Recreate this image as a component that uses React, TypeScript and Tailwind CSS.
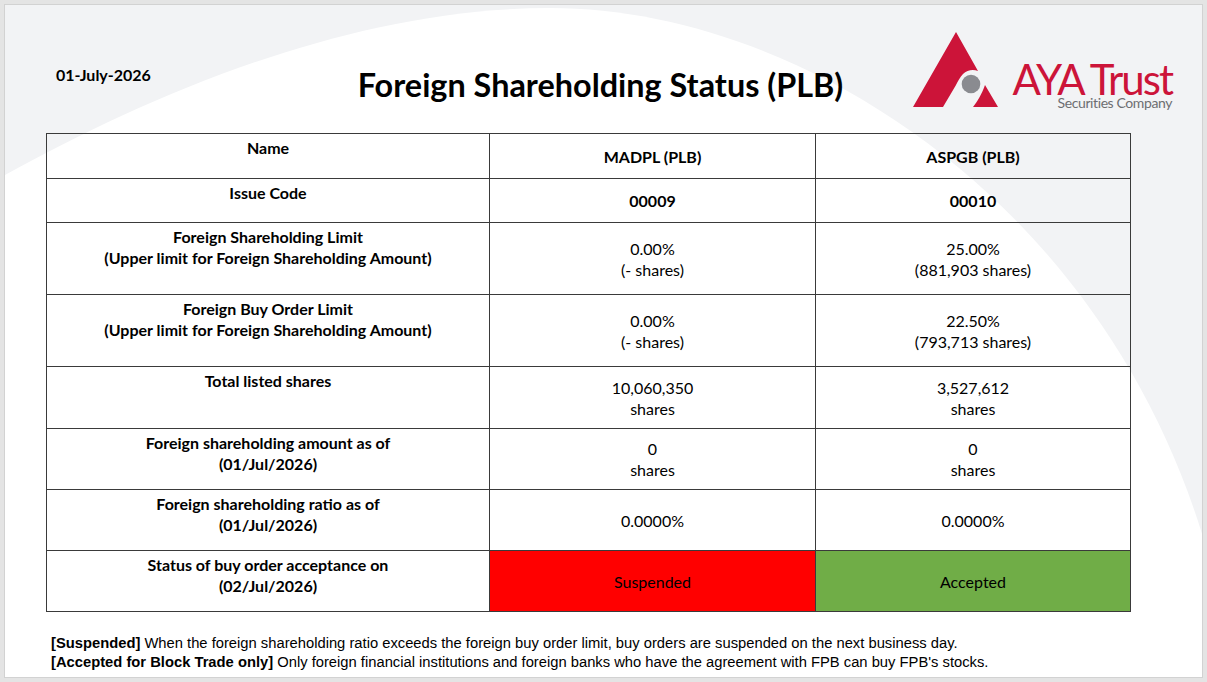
const BODY = '"Lato", "Open Sans", sans-serif';

type Row = {
  label: string[];
  h: string;
  a: string[];
  b: string[];
  bold?: boolean;
  status?: boolean;
};

const ROWS: Row[] = [
  { label: ['Name'], h: 'h-[45px]', a: ['MADPL (PLB)'], b: ['ASPGB (PLB)'], bold: true },
  { label: ['Issue Code'], h: 'h-[44px]', a: ['00009'], b: ['00010'], bold: true },
  {
    label: ['Foreign Shareholding Limit', '(Upper limit for Foreign Shareholding Amount)'],
    h: 'h-[72px]',
    a: ['0.00%', '(- shares)'],
    b: ['25.00%', '(881,903 shares)'],
  },
  {
    label: ['Foreign Buy Order Limit', '(Upper limit for Foreign Shareholding Amount)'],
    h: 'h-[72px]',
    a: ['0.00%', '(- shares)'],
    b: ['22.50%', '(793,713 shares)'],
  },
  { label: ['Total listed shares'], h: 'h-[62px]', a: ['10,060,350', 'shares'], b: ['3,527,612', 'shares'] },
  {
    label: ['Foreign shareholding amount as of', '(01/Jul/2026)'],
    h: 'h-[61px]',
    a: ['0', 'shares'],
    b: ['0', 'shares'],
  },
  {
    label: ['Foreign shareholding ratio as of', '(01/Jul/2026)'],
    h: 'h-[61px]',
    a: ['0.0000%'],
    b: ['0.0000%'],
  },
  {
    label: ['Status of buy order acceptance on', '(02/Jul/2026)'],
    h: 'h-[61px]',
    a: ['Suspended'],
    b: ['Accepted'],
    status: true,
  },
];

function Logo(): JSX.Element {
  return (
    <div className="flex items-start">
      <svg width="85" height="75" viewBox="0 0 85 75" className="shrink-0">
        <path
          d="M43,0 L65,39 C60,37 54,38 50,42 C47,45 45,49 43,53 L30,75 L0,75 Z"
          fill="#cc1439"
        />
        <path d="M72,53 L85,75 L60,75 C64,70 69,62 72,53 Z" fill="#cc1439" />
        <circle cx="58" cy="52" r="9.3" fill="#8a8b90" />
      </svg>
      <div className="ml-[15px] flex flex-col items-end pt-[30px]">
        <span className="text-[42px] leading-[34px] tracking-[-2px] text-[#cc1439]">AYA Trust</span>
        <span className="text-[14px] leading-[14px] tracking-[-0.4px] text-[#6d6e71]">Securities Company</span>
      </div>
    </div>
  );
}

function Lines(props: { lines: string[] }): JSX.Element {
  return (
    <>
      {props.lines.map((l, i) => (
        <div key={i}>{l}</div>
      ))}
    </>
  );
}

export default function App(): JSX.Element {
  return (
    <div className="h-[682px] w-[1207px] bg-[#e4e4e4] p-[4px]">
      <div className="relative h-[674px] w-[1199px] overflow-hidden border border-[#d2d2d2] bg-white">
        <svg className="absolute inset-0" width="1197" height="672" viewBox="5 5 1197 672">
          <rect x="0" y="0" width="1210" height="690" fill="#f2f3f5" />
          <path
            d="M5,175 C150,95 350,8 550,8 C800,8 1100,200 1203,537 L1203,680 L0,680 Z"
            fill="#ffffff"
          />
        </svg>

        <div className="relative flex flex-col" style={{ fontFamily: BODY }}>
          <header className="grid h-[128px] grid-cols-[1fr_auto_1fr]">
            <div className="pl-[51px] pt-[58px] text-[16px] font-bold leading-[24px] text-black">
              01-July-2026
            </div>
            <h1 className="pr-[6px] pt-[62px] text-[32.4px] font-bold leading-[36px] text-black">
              Foreign Shareholding Status (PLB)
            </h1>
            <div className="flex justify-end pr-[30px] pt-[27px]">
              <Logo />
            </div>
          </header>

          <table className="ml-[41px] w-[1084px] table-fixed border-collapse text-[16px] text-black">
            <colgroup>
              <col className="w-[443px]" />
              <col className="w-[326px]" />
              <col className="w-[315px]" />
            </colgroup>
            <tbody>
              {ROWS.map((r) => (
                <tr key={r.label[0]} className={r.h}>
                  <td className="border border-[#3a3a3a] px-2 pt-[3px] align-top text-center font-bold leading-[21px]">
                    <Lines lines={r.label} />
                  </td>
                  <td
                    className={`border border-[#3a3a3a] px-2 text-center align-middle leading-[21px] ${
                      r.bold ? 'font-bold' : ''
                    } ${r.status ? 'bg-[#ff0000]' : ''}`}
                  >
                    <Lines lines={r.a} />
                  </td>
                  <td
                    className={`border border-[#3a3a3a] px-2 text-center align-middle leading-[21px] ${
                      r.bold ? 'font-bold' : ''
                    } ${r.status ? 'bg-[#70ad47]' : ''}`}
                  >
                    <Lines lines={r.b} />
                  </td>
                </tr>
              ))}
            </tbody>
          </table>

          <div
            className="mt-[22px] pl-[46px] text-[14.75px] leading-[19px] text-black"
            style={{ fontFamily: '"Liberation Sans", Arial, sans-serif' }}
          >
            <p>
              <b>[Suspended]</b> When the foreign shareholding ratio exceeds the foreign buy order limit, buy orders
              are suspended on the next business day.
            </p>
            <p>
              <b>[Accepted for Block Trade only]</b> Only foreign financial institutions and foreign banks who have the
              agreement with FPB can buy FPB's stocks.
            </p>
          </div>
        </div>
      </div>
    </div>
  );
}
